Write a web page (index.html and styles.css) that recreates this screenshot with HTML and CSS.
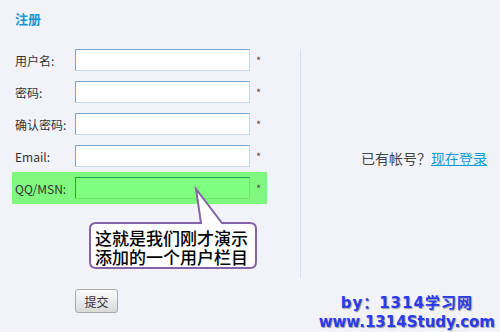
FILE: index.html
```html
<!DOCTYPE html>
<html lang="zh-CN">
<head>
    <meta charset="UTF-8">
    <title>注册</title>
    <link rel="stylesheet" href="styles.css">
</head>
<body>
    <div class="page">
        <h2 class="title">注册</h2>
        <div class="main">
            <div class="form-col">
                <div class="row">
                    <label for="user">用户名:</label>
                    <input type="text" id="user">
                    <span class="req">*</span>
                </div>
                <div class="row">
                    <label for="pwd">密码:</label>
                    <input type="password" id="pwd">
                    <span class="req">*</span>
                </div>
                <div class="row">
                    <label for="pwd2">确认密码:</label>
                    <input type="password" id="pwd2">
                    <span class="req">*</span>
                </div>
                <div class="row">
                    <label for="email">Email:</label>
                    <input type="text" id="email">
                    <span class="req">*</span>
                </div>
                <div class="row row-new">
                    <label for="qq">QQ/MSN:</label>
                    <input type="text" id="qq">
                    <span class="req">*</span>
                </div>
            </div>
            <div class="side">
                <p>已有帐号？<a href="#">现在登录</a></p>
            </div>
        </div>
        <div class="actions">
            <button type="button">提交</button>
        </div>

        <div class="callout">
            <svg width="171" height="85" viewBox="0 0 171 85">
                <path d="M8,37 H113 L108,3 L134,37 H162 Q168,37 168,43 V76 Q168,82 162,82 H8 Q2,82 2,76 V43 Q2,37 8,37 Z" fill="#fff" stroke="#8563a9" stroke-width="2"/>
            </svg>
            <p class="line-1">这就是我们刚才演示</p>
            <p class="line-2">添加的一个用户栏目</p>
        </div>

        <div class="stamp">
            <p class="by">by：1314学习网</p>
            <p>www.1314Study.com</p>
        </div>
    </div>
</body>
</html>
```

FILE: styles.css
```css
body {
    margin: 0;
    background: #f1f3f8;
    font-family: "Noto Sans CJK SC", "DejaVu Sans", sans-serif;
    font-size: 12px;
    color: #333;
}
.page {
    position: relative;
    height: 332px;
    padding-left: 12px;
    box-sizing: border-box;
}
.title {
    margin: 0;
    padding: 11px 0 0 3px;
    height: 44px;
    box-sizing: border-box;
    font-size: 13px;
    line-height: 16px;
    font-weight: bold;
    color: #1796d6;
}
.main {
    display: flex;
}
.form-col {
    width: 288px;
    height: 234px;
}
.row {
    display: flex;
    align-items: center;
    width: 255px;
    height: 32px;
    padding-left: 3px;
    box-sizing: border-box;
}
.row label {
    width: 60px;
    color: #333;
}
.row input {
    width: 175px;
    height: 22px;
    margin: 0;
    padding: 0 3px;
    box-sizing: border-box;
    background: #fff;
    border: 1px solid #c7dbef;
    border-top-color: #7aa5cf;
    border-left-color: #7aa5cf;
    outline: none;
}
.req {
    margin-left: 6px;
    color: #5a4a4a;
    font-size: 11px;
}
.row-new {
    background: #80f880;
}
.row-new input {
    background: #80ff80;
    border-color: #6ee46e;
    border-top-color: #12a85c;
    border-left-color: #12a85c;
}
.side {
    flex: 1;
    margin-top: 5px;
    height: 229px;
    border-left: 1px solid #cfe3f5;
    display: flex;
    align-items: center;
    justify-content: flex-end;
    padding: 0 13px 12px 0;
    box-sizing: border-box;
}
.side p {
    margin: 0;
    font-size: 14px;
    color: #444;
}
.side a {
    color: #0a9ad3;
}
.actions {
    padding: 11px 0 0 63px;
}
.actions button {
    width: 43px;
    height: 24px;
    padding: 0;
    font-family: inherit;
    font-size: 12px;
    color: #333;
    border: 1px solid #a9a9a9;
    border-radius: 3px;
    background: linear-gradient(#fdfdfd, #d9d9d9);
}
.callout {
    position: absolute;
    left: 88px;
    top: 186px;
    width: 171px;
    height: 85px;
}
.callout svg {
    display: block;
}
.callout p {
    position: absolute;
    left: 7px;
    margin: 0;
    font-size: 17px;
    line-height: 19px;
    height: 19px;
    font-weight: 500;
    color: #000;
    white-space: nowrap;
}
.callout .line-1 {
    top: 42px;
}
.callout .line-2 {
    top: 61px;
}
.stamp {
    position: absolute;
    right: 5px;
    bottom: 0;
    text-align: center;
    font-family: "DejaVu Sans", "Noto Sans CJK SC", sans-serif;
    font-weight: bold;
    font-size: 15px;
    line-height: 19px;
    color: #2a3af0;
    text-shadow: 1px 1px 1px #9a9a9a;
}
.stamp p {
    margin: 0;
}
.stamp .by {
    letter-spacing: 1px;
}
```
